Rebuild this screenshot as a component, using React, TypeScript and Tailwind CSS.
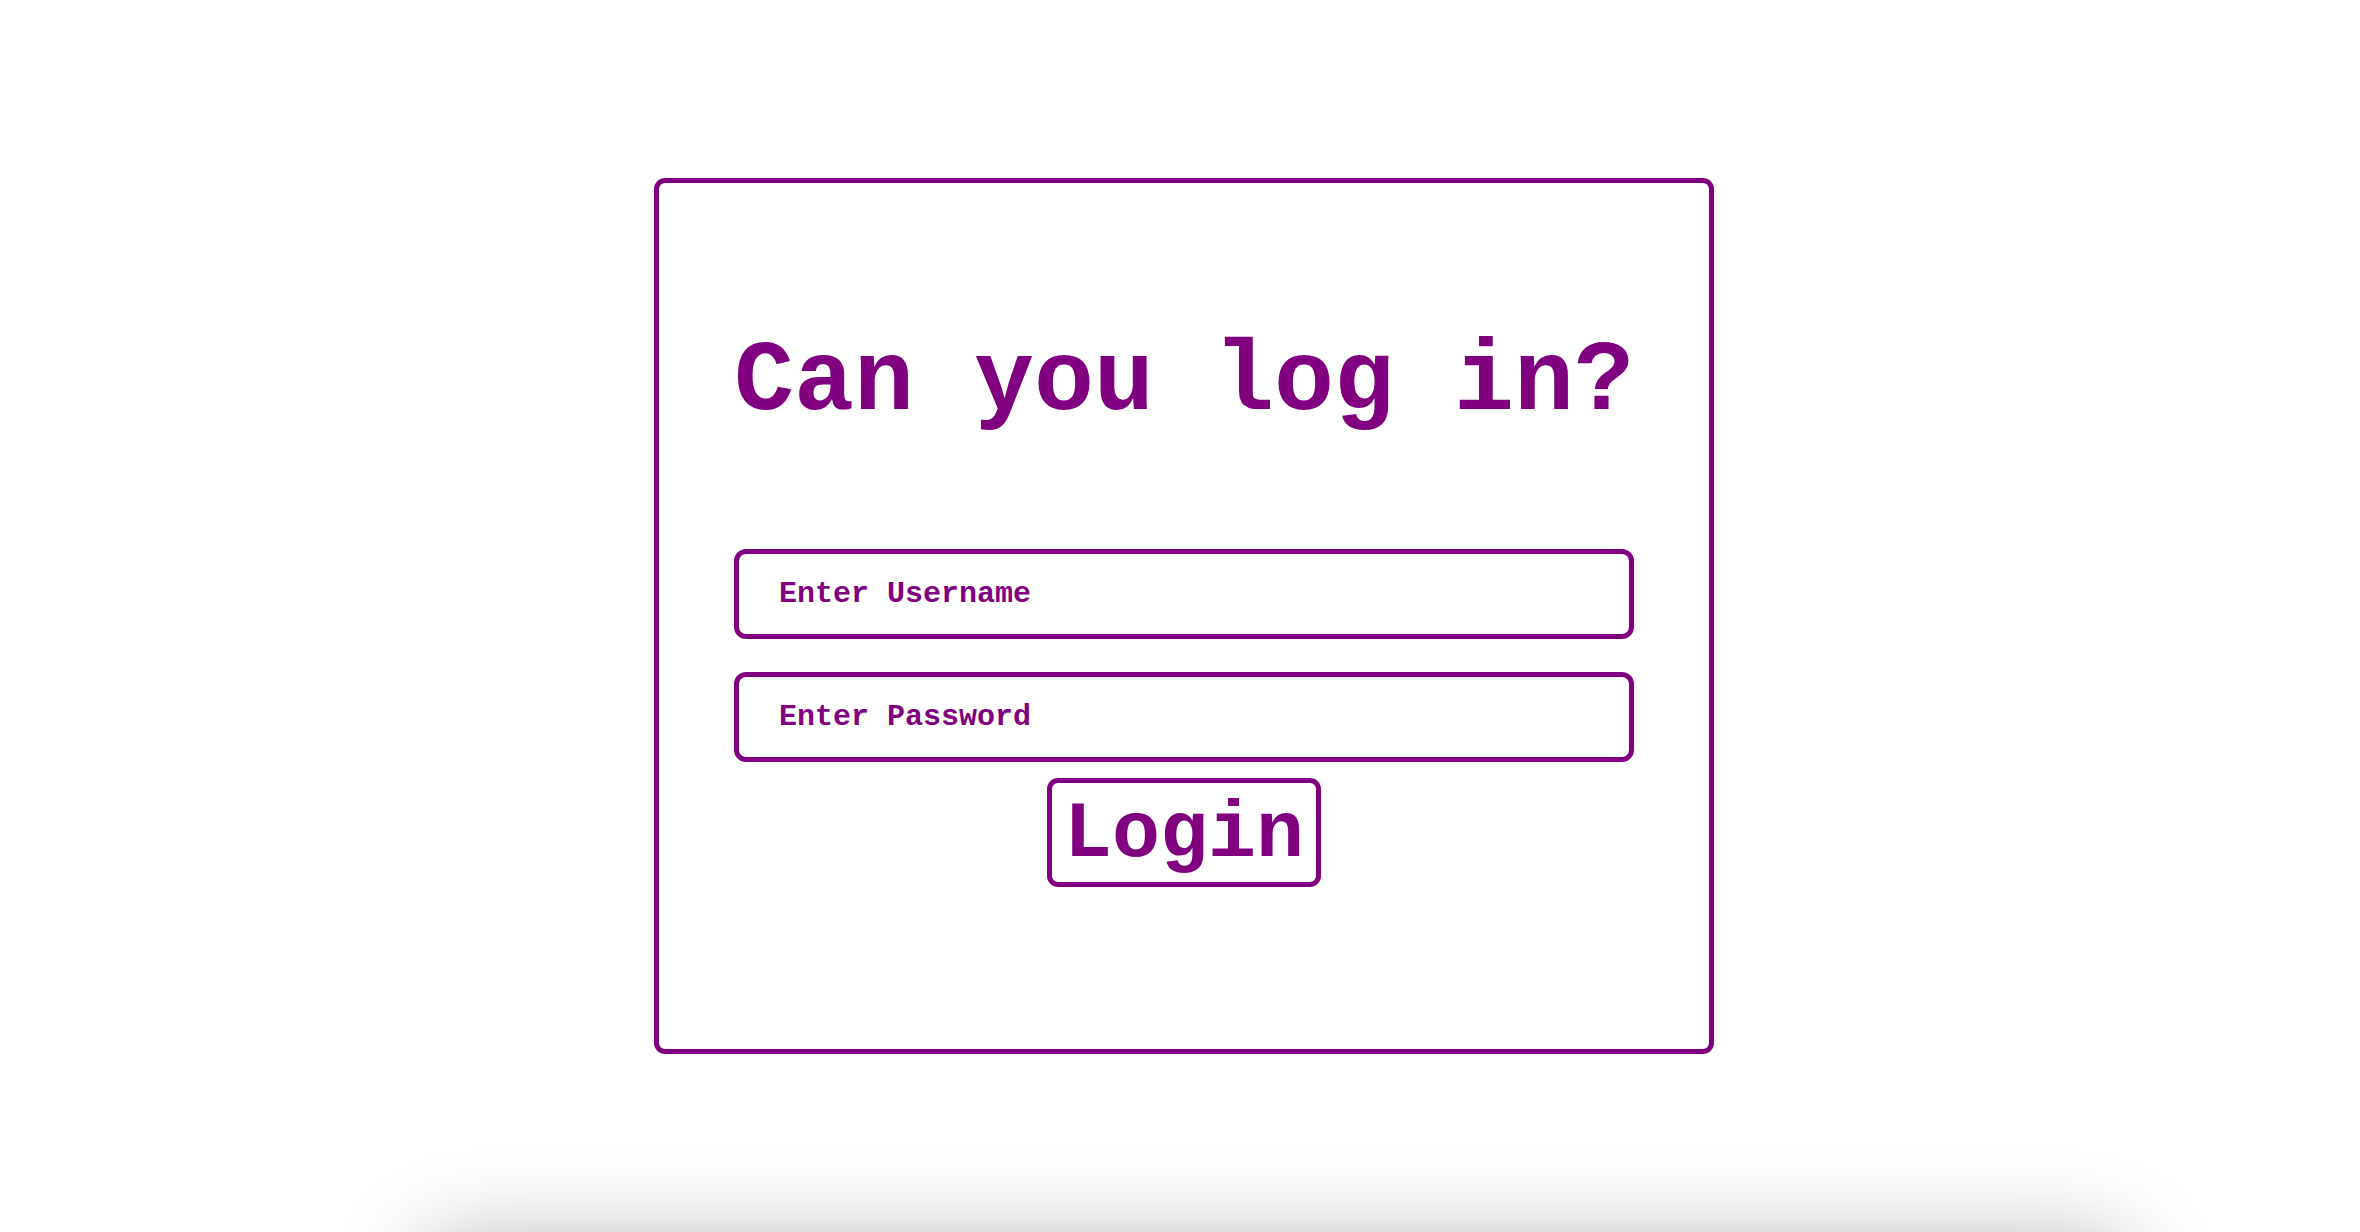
export default function App() {
  return (
    <div className="bg-white font-['Courier_New','Liberation_Mono',monospace] text-[#800080]">
      <div className="flex h-[1232px] items-center justify-center pl-[8px]">
        <div className="flex h-[876px] w-[1060px] flex-col items-center rounded-[11px] border-[5px] border-[#800080] pt-[143px]">
          <h1 className="text-[100px] font-bold leading-[113px]">Can you log in?</h1>

          <input
            type="text"
            placeholder="Enter Username"
            className="mt-[110px] h-[90px] w-[900px] rounded-[12px] border-[5px] border-[#800080] pl-[40px] text-[30px] font-bold text-[#800080] outline-none placeholder:text-[#800080]"
          />
          <input
            type="password"
            placeholder="Enter Password"
            className="mt-[33px] h-[90px] w-[900px] rounded-[12px] border-[5px] border-[#800080] pl-[40px] text-[30px] font-bold text-[#800080] outline-none placeholder:text-[#800080]"
          />

          <button className="mt-[16px] rounded-[11px] border-[5px] border-[#800080] bg-white px-[12px] pt-[6px] pb-[2px] text-[80px] font-bold leading-[91px] text-[#800080]">
            Login
          </button>
        </div>
      </div>

      <div className="mt-[10px] ml-[420px] h-[200px] w-[1710px] rounded-[40px] bg-white shadow-[0_0_90px_rgba(0,0,0,0.3)]" />
    </div>
  );
}
